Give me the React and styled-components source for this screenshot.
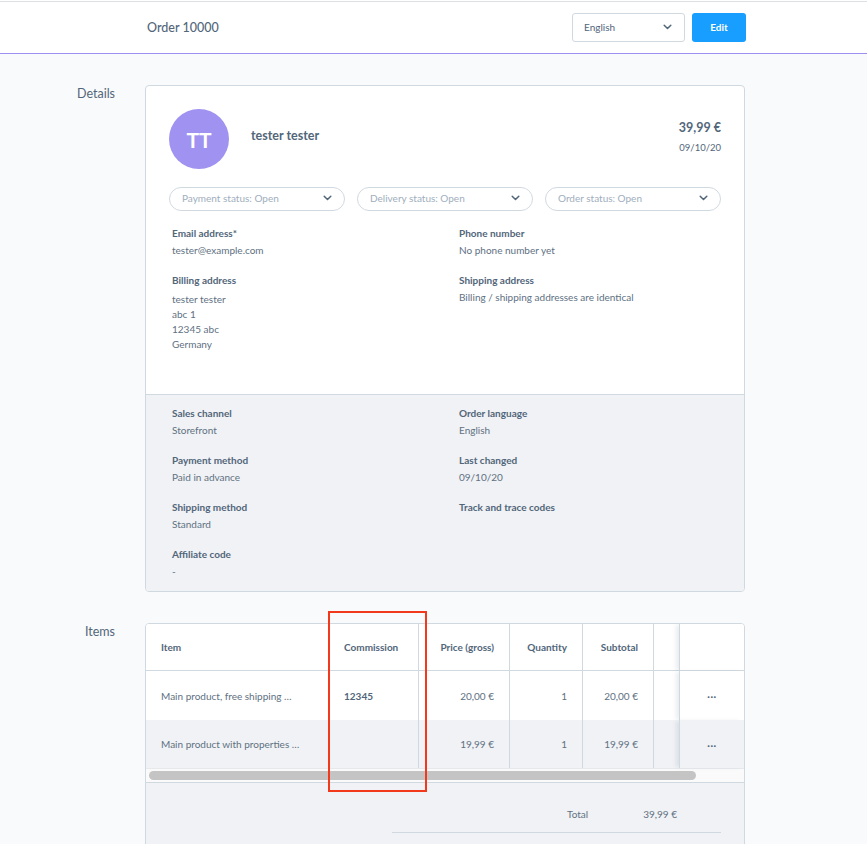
import React from "react";
import styled, { createGlobalStyle } from "styled-components";

const Global = createGlobalStyle`
  html, body { margin: 0; padding: 0; }
  body {
    background: #f9fafb;
    font-family: Lato, "Open Sans", sans-serif;
    color: #52667a;
    -webkit-font-smoothing: antialiased;
  }
  * { box-sizing: border-box; }
`;

const Header = styled.header`
  height: 54px;
  background: linear-gradient(#ffffff 0 1px, #dde1e6 1px 2px, #ffffff 2px);
  border-bottom: 1px solid #9d8ff2;
  display: flex;
  justify-content: center;
`;

const HeaderInner = styled.div`
  width: 602px;
  margin-left: 144px;
  margin-right: 121px;
  display: flex;
  align-items: center;
  padding-left: 3px;
  padding-top: 1px;
`;

const Title = styled.h1`
  margin: 0;
  flex: 1;
  font-size: 12.5px;
  font-weight: 500;
  color: #52667a;
`;

const LangSelect = styled.div`
  width: 113px;
  height: 29px;
  border: 1px solid #d1d9e0;
  border-radius: 3px;
  background: #fff;
  display: flex;
  align-items: center;
  justify-content: space-between;
  padding: 0 12px 0 11px;
  font-size: 10px;
  color: #52667a;
`;

const EditButton = styled.button`
  margin-left: 7px;
  width: 54px;
  height: 29px;
  border: none;
  border-radius: 3px;
  background: #189eff;
  color: #fff;
  font-family: inherit;
  font-size: 10px;
  font-weight: 700;
`;

const Main = styled.main`
  display: grid;
  grid-template-columns: 115px 600px;
  column-gap: 30px;
  row-gap: 31px;
  padding-top: 31px;
`;

const SectionLabel = styled.div`
  text-align: right;
  font-size: 12.5px;
  color: #52667a;
  padding-top: ${(p) => p.$top || 0}px;
`;

const Card = styled.section`
  background: #fff;
  border: 1px solid #d1d9e0;
  border-radius: 4px;
  overflow: hidden;
`;

const CardTop = styled.div`
  padding: 23px 23px 42px 23px;
`;

const CustomerRow = styled.div`
  display: flex;
  align-items: flex-start;
`;

const Avatar = styled.div`
  width: 60px;
  height: 60px;
  border-radius: 50%;
  background: #a092f0;
  color: #fff;
  font-size: 21px;
  font-weight: 700;
  display: flex;
  align-items: center;
  justify-content: center;
  flex-shrink: 0;
`;

const CustomerName = styled.div`
  margin-left: 22px;
  margin-top: 19px;
  flex: 1;
  font-size: 12.5px;
  font-weight: 700;
  color: #52667a;
`;

const Summary = styled.div`
  text-align: right;
  margin-top: 11px;
`;

const Amount = styled.div`
  font-size: 12.5px;
  font-weight: 700;
  color: #52667a;
`;

const SmallDate = styled.div`
  margin-top: 7px;
  font-size: 9.5px;
  color: #52667a;
`;

const StatusRow = styled.div`
  margin-top: 18px;
  display: grid;
  grid-template-columns: repeat(3, 176px);
  column-gap: 12px;
`;

const StatusSelect = styled.div`
  height: 24px;
  border: 1px solid #d1d9e0;
  border-radius: 12px;
  display: flex;
  align-items: center;
  justify-content: space-between;
  padding: 0 12px 2px 12px;
  font-size: 10px;
  color: #a0aebd;
`;

const FieldGrid = styled.div`
  margin-top: ${(p) => p.$mt ?? 15}px;
  padding-left: ${(p) => p.$pl ?? 3}px;
  display: grid;
  grid-template-columns: 287px 1fr;
  row-gap: 15px;
`;

const Field = styled.div``;

const FieldLabel = styled.div`
  font-size: 10px;
  line-height: 15px;
  font-weight: 700;
  color: #52667a;
`;

const FieldValue = styled.div`
  margin-top: ${(p) => p.$gap || 2}px;
  font-size: 10px;
  line-height: 15px;
  color: #607182;
`;

const CardBottom = styled.div`
  background: #f0f2f5;
  border-top: 1px solid #d1d9e0;
  padding: 11px 26px 12px 26px;
`;

const Grid = styled.div`
  display: grid;
  grid-template-columns: 183px 90px 91px 73px 71px 25px 65px;
`;

const HeadCell = styled.div`
  height: 47px;
  display: flex;
  align-items: center;
  justify-content: ${(p) => (p.$right ? "flex-end" : p.$center ? "center" : "flex-start")};
  padding: 0 15px 0 15px;
  font-size: 10px;
  font-weight: 700;
  color: #52667a;
  border-bottom: 1px solid #d1d9e0;
  border-right: ${(p) => (p.$noBorder ? "none" : "1px solid #d1d9e0")};
  background: #fff;
  white-space: nowrap;
  ${(p) => (p.$sticky ? "border-left: 1px solid #d1d9e0; box-shadow: -4px 0 4px -1px rgba(82,102,122,0.12);" : "")}
`;

const Cell = styled.div`
  height: ${(p) => (p.$h ? p.$h : 49)}px;
  display: flex;
  align-items: center;
  justify-content: ${(p) => (p.$right ? "flex-end" : p.$center ? "center" : "flex-start")};
  padding: 0 15px 0 15px;
  font-size: 10px;
  font-weight: ${(p) => (p.$bold ? 700 : 400)};
  color: ${(p) => (p.$bold ? "#52667a" : "#607182")};
  border-right: ${(p) => (p.$noBorder ? "none" : "1px solid #d1d9e0")};
  background: ${(p) => (p.$alt ? "#f0f2f5" : "#fff")};
  white-space: nowrap;
  overflow: hidden;
  ${(p) => (p.$sticky ? "border-left: 1px solid #d1d9e0; box-shadow: -4px 0 4px -1px rgba(82,102,122,0.12);" : "")}
`;

const Dots = styled.span`
  font-weight: 900;
  font-size: 11px;
  letter-spacing: 0.5px;
  color: #52667a;
  margin-top: -4px;
`;

const ScrollTrack = styled.div`
  height: 15px;
  background: #fafafa;
  border-top: 1px solid #e6e9ec;
  border-bottom: 1px solid #d1d9e0;
  padding: 2px 3px;
`;

const ScrollThumb = styled.div`
  width: 547px;
  height: 9px;
  border-radius: 5px;
  background: #c4c4c4;
`;

const TableFoot = styled.div`
  background: #f0f2f5;
  padding: 25px 23px 60px 0;
  display: flex;
  justify-content: flex-end;
`;

const Totals = styled.div`
  width: 329px;
  border-bottom: 1px solid #d1d9e0;
  padding: 0 44px 12px 0;
  display: flex;
  justify-content: flex-end;
  gap: 55px;
  font-size: 10px;
  color: #607182;
`;

const ItemsWrap = styled.div`
  position: relative;
`;

const Annotation = styled.div`
  position: absolute;
  left: 183px;
  top: -12px;
  width: 99px;
  height: 181px;
  border: 2px solid #f2391c;
  pointer-events: none;
  z-index: 5;
`;

const Chevron = ({ color = "#52667a" }) => (
  <svg width="9" height="6" viewBox="0 0 9 6">
    <path d="M1.2 1.2l3.3 3.3 3.3-3.3" fill="none" stroke={color} strokeWidth="1.5" strokeLinecap="round" strokeLinejoin="round" />
  </svg>
);

const statuses = ["Payment status: Open", "Delivery status: Open", "Order status: Open"];

const items = [
  { name: "Main product, free shipping …", commission: "12345", price: "20,00 €", qty: "1", total: "20,00 €" },
  { name: "Main product with properties …", commission: "", price: "19,99 €", qty: "1", total: "19,99 €", alt: true },
];

export default function App() {
  return (
    <>
      <Global />
      <Header>
        <HeaderInner>
          <Title>Order 10000</Title>
          <LangSelect>
            English
            <Chevron />
          </LangSelect>
          <EditButton>Edit</EditButton>
        </HeaderInner>
      </Header>
      <Main>
        <SectionLabel $top={1}>Details</SectionLabel>
        <Card>
          <CardTop>
            <CustomerRow>
              <Avatar>TT</Avatar>
              <CustomerName>tester tester</CustomerName>
              <Summary>
                <Amount>39,99 €</Amount>
                <SmallDate>09/10/20</SmallDate>
              </Summary>
            </CustomerRow>
            <StatusRow>
              {statuses.map((s) => (
                <StatusSelect key={s}>
                  {s}
                  <Chevron />
                </StatusSelect>
              ))}
            </StatusRow>
            <FieldGrid>
              <Field>
                <FieldLabel>Email address*</FieldLabel>
                <FieldValue>tester@example.com</FieldValue>
              </Field>
              <Field>
                <FieldLabel>Phone number</FieldLabel>
                <FieldValue>No phone number yet</FieldValue>
              </Field>
              <Field>
                <FieldLabel>Billing address</FieldLabel>
                <FieldValue $gap={4}>
                  tester tester
                  <br />
                  abc 1
                  <br />
                  12345 abc
                  <br />
                  Germany
                </FieldValue>
              </Field>
              <Field>
                <FieldLabel>Shipping address</FieldLabel>
                <FieldValue>Billing / shipping addresses are identical</FieldValue>
              </Field>
            </FieldGrid>
          </CardTop>
          <CardBottom>
            <FieldGrid $mt={0} $pl={0}>
              <Field>
                <FieldLabel>Sales channel</FieldLabel>
                <FieldValue>Storefront</FieldValue>
              </Field>
              <Field>
                <FieldLabel>Order language</FieldLabel>
                <FieldValue>English</FieldValue>
              </Field>
              <Field>
                <FieldLabel>Payment method</FieldLabel>
                <FieldValue>Paid in advance</FieldValue>
              </Field>
              <Field>
                <FieldLabel>Last changed</FieldLabel>
                <FieldValue>09/10/20</FieldValue>
              </Field>
              <Field>
                <FieldLabel>Shipping method</FieldLabel>
                <FieldValue>Standard</FieldValue>
              </Field>
              <Field>
                <FieldLabel>Track and trace codes</FieldLabel>
              </Field>
              <Field>
                <FieldLabel>Affiliate code</FieldLabel>
                <FieldValue>-</FieldValue>
              </Field>
            </FieldGrid>
          </CardBottom>
        </Card>

        <SectionLabel $top={1}>Items</SectionLabel>
        <ItemsWrap>
          <Card>
            <Grid>
              <HeadCell>Item</HeadCell>
              <HeadCell>Commission</HeadCell>
              <HeadCell $right>Price (gross)</HeadCell>
              <HeadCell $right>Quantity</HeadCell>
              <HeadCell $right>Subtotal</HeadCell>
              <HeadCell $noBorder />
              <HeadCell $sticky $noBorder />
              {items.map((it) => (
                <React.Fragment key={it.name}>
                  <Cell $alt={it.alt} $h={it.alt ? 48 : 49}>{it.name}</Cell>
                  <Cell $alt={it.alt} $h={it.alt ? 48 : 49} $bold>{it.commission}</Cell>
                  <Cell $alt={it.alt} $h={it.alt ? 48 : 49} $right>{it.price}</Cell>
                  <Cell $alt={it.alt} $h={it.alt ? 48 : 49} $right>{it.qty}</Cell>
                  <Cell $alt={it.alt} $h={it.alt ? 48 : 49} $right>{it.total}</Cell>
                  <Cell $alt={it.alt} $h={it.alt ? 48 : 49} $noBorder />
                  <Cell $alt={it.alt} $h={it.alt ? 48 : 49} $sticky $noBorder $center>
                    <Dots>...</Dots>
                  </Cell>
                </React.Fragment>
              ))}
            </Grid>
            <ScrollTrack>
              <ScrollThumb />
            </ScrollTrack>
            <TableFoot>
              <Totals>
                <span>Total</span>
                <span>39,99 €</span>
              </Totals>
            </TableFoot>
          </Card>
          <Annotation />
        </ItemsWrap>
      </Main>
    </>
  );
}
